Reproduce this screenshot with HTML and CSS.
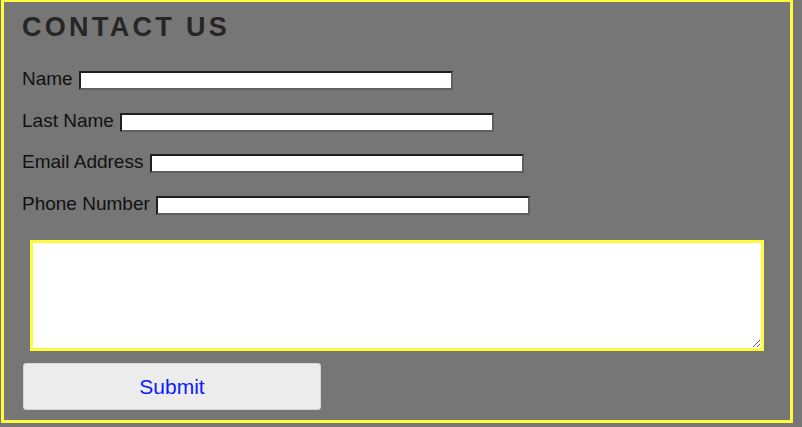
FILE: index.html
```html
<!DOCTYPE html>
<html>
<head>
<meta charset="utf-8">
<title>Contact Us</title>
<link rel="stylesheet" href="styles.css">
</head>
<body>
<form class="contact">
  <h1 class="title">CONTACT US</h1>
  <div class="fields">
    <div class="row"><label class="label" for="name">Name</label><input class="field" id="name" type="text"></div>
    <div class="row"><label class="label" for="last">Last Name</label><input class="field" id="last" type="text"></div>
    <div class="row"><label class="label" for="email">Email Address</label><input class="field" id="email" type="text"></div>
    <div class="row"><label class="label" for="phone">Phone Number</label><input class="field" id="phone" type="text"></div>
  </div>
  <div class="message-wrap"><textarea class="message"></textarea></div>
  <button class="submit" type="button">Submit</button>
</form>
</body>
</html>
```
FILE: styles.css
```css
html, body {
  margin: 0;
  padding: 0;
  background: #767676;
}
body {
  font-family: "Liberation Sans", Arial, sans-serif;
}
.contact {
  margin: 0 9px 0 1px;
  border-style: solid;
  border-color: #fffb3c;
  border-width: 2px 3px 3px 3px;
  padding: 10px 18px 10px 18px;
}
.title {
  margin: 0;
  font-size: 27px;
  line-height: 31px;
  font-weight: bold;
  letter-spacing: 3.3px;
  color: #262626;
}
.fields {
  margin-top: 26px;
  display: flex;
  flex-direction: column;
  gap: 20.5px;
}
.row {
  display: flex;
  align-items: flex-start;
  height: 21px;
}
.label {
  font-size: 19px;
  line-height: 19px;
  color: #111;
  margin-right: 6.5px;
}
.field {
  margin: 2px 0 0 0;
  box-sizing: border-box;
  width: 374px;
  height: 19px;
  padding: 1px 2px;
  background: #fff;
  border-style: solid;
  border-width: 2px;
  border-color: #1f1f1f #5f5f5f #5f5f5f #1f1f1f;
  outline: none;
  font-size: 13px;
}
.message-wrap {
  margin-top: 25.5px;
  padding: 0 8px;
}
.message {
  display: block;
  box-sizing: border-box;
  width: 100%;
  height: 111px;
  margin: 0;
  border: 3px solid #fffb3c;
  background: #fff;
  outline: none;
}
.submit {
  display: block;
  margin: 12px 0 0 1px;
  width: 298px;
  height: 47px;
  background: #ececec;
  border: 1px solid #d6d6d6;
  border-radius: 3px;
  color: #0a1bff;
  font-family: "Liberation Sans", Arial, sans-serif;
  font-size: 21px;
}
```
